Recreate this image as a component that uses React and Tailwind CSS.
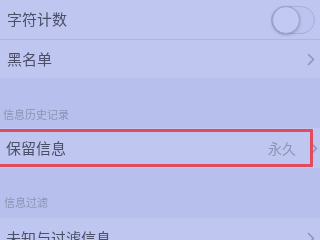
import React from "react";

const font = { fontFamily: '"Noto Sans CJK SC", "Noto Sans", sans-serif' };

function Chevron({ className = "" }) {
  return (
    <svg width="8" height="13" viewBox="0 0 8 13" className={className}>
      <path d="M1.5 1.5 L6.5 6.5 L1.5 11.5" fill="none" stroke="#8f95b5" strokeWidth="1.6" strokeLinecap="round" strokeLinejoin="round" />
    </svg>
  );
}

export default function App() {
  return (
    <div className="w-[320px] h-[240px] overflow-hidden bg-[#b7c0ec] blur-[0.6px]" style={font}>
      <div className="bg-[#bfc7f1]">
        <div className="h-[40px] flex items-center justify-between pl-[7px] pr-[5px] border-b border-[#aeb6e2]">
          <span className="text-[15px] text-[#4b5068]">字符计数</span>
          <div className="w-[44px] h-[28px] rounded-full border border-[#a7afd8] bg-[#bcc4ef] flex items-center">
            <div className="w-[28px] h-[28px] rounded-full border border-[#9aa2cc] bg-[#c2caf3] shadow-[0_1px_3px_rgba(60,70,120,0.35)]" />
          </div>
        </div>
        <div className="h-[38px] flex items-center justify-between pl-[7px] pr-[5px]">
          <span className="text-[15px] text-[#4b5068]">黑名单</span>
          <Chevron />
        </div>
      </div>
      <div className="h-[50px] flex items-end pl-[3px] pb-[6px]">
        <span className="text-[11px] text-[#8d93b3]">信息历史记录</span>
      </div>
      <div className="relative bg-[#bfc7f1] h-[40px] flex items-center justify-between pl-[6px] pr-[2px]">
        <span className="text-[15px] text-[#4b5068]">保留信息</span>
        <div className="flex items-center gap-[14px]">
          <span className="text-[14px] text-[#8f95b4]">永久</span>
          <Chevron />
        </div>
        <div className="absolute left-[-4px] top-[1px] w-[317px] h-[38px] border-[3px] border-[#e24b5e] rounded-[1px]" />
      </div>
      <div className="h-[50px] flex items-end pl-[4px] pb-[8px]">
        <span className="text-[11px] text-[#8d93b3]">信息过滤</span>
      </div>
      <div className="bg-[#bfc7f1] h-[40px] flex items-center justify-between pl-[6px] pr-[5px]">
        <span className="text-[15px] text-[#4b5068]">未知与过滤信息</span>
        <Chevron />
      </div>
    </div>
  );
}
